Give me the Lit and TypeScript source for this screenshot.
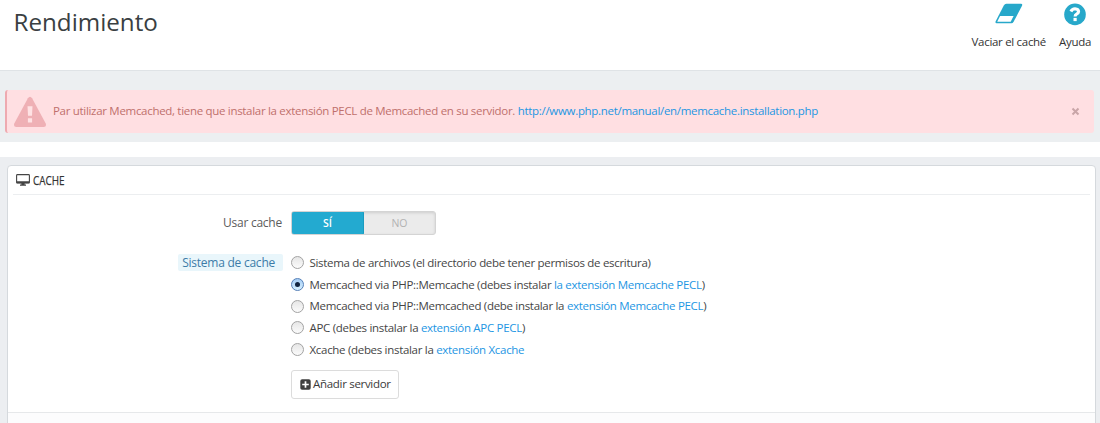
/**
 * Performance settings page
 *
 * Page header with toolbar, alert message and the cache configuration panel
 */

import { LitElement, html, css, nothing } from 'lit';
import { customElement, state } from 'lit/decorators.js';
import { classMap } from 'lit/directives/class-map.js';

interface CacheSystem {
  id: string;
  label: string;
  link?: string;
  suffix?: string;
}

const CACHE_SYSTEMS: CacheSystem[] = [
  { id: 'fs', label: 'Sistema de archivos (el directorio debe tener permisos de escritura)' },
  {
    id: 'memcache',
    label: 'Memcached via PHP::Memcache (debes instalar ',
    link: 'la extensión Memcache PECL',
    suffix: ')',
  },
  {
    id: 'memcached',
    label: 'Memcached via PHP::Memcached (debe instalar la ',
    link: 'extensión Memcache PECL',
    suffix: ')',
  },
  { id: 'apc', label: 'APC (debes instalar la ', link: 'extensión APC PECL', suffix: ')' },
  { id: 'xcache', label: 'Xcache (debes instalar la ', link: 'extensión Xcache' },
];

@customElement('app-root')
export class AppRoot extends LitElement {
  @state()
  private cacheEnabled = true;

  @state()
  private selected = 'memcache';

  static override styles = css`
    :host {
      display: flex;
      flex-direction: column;
      height: 423px;
      overflow: hidden;
      background: #fff;
      color: #454545;
      font-family: 'Open Sans', 'Noto Sans', sans-serif;
      font-size: 11.5px;
      letter-spacing: -0.305px;
      line-height: 16px;
    }

    * {
      box-sizing: border-box;
    }

    svg {
      display: block;
      flex: none;
    }

    a {
      color: #1d96e3;
      text-decoration: none;
    }

    .header {
      display: flex;
      justify-content: space-between;
      height: 70px;
      padding: 0 9px 0 13.5px;
      flex: none;
    }

    h1 {
      margin: 6px 0 0;
      font-size: 24.2px;
      font-weight: 400;
      letter-spacing: 0;
      line-height: 32px;
      color: #3a3f42;
    }

    .toolbar {
      display: flex;
      gap: 13px;
      padding-top: 3px;
    }

    .tool {
      display: flex;
      flex-direction: column;
      align-items: center;
      gap: 8px;
      color: #333;
      white-space: nowrap;
    }

    .notice {
      flex: none;
      height: 72px;
      padding: 19px 6px 0 5px;
      border-top: 1px solid #dfe3e6;
      background: #eceff1;
    }

    .alert {
      display: flex;
      align-items: center;
      height: 43px;
      padding: 0 14px 0 6px;
      border-left: 2px solid #eeaab0;
      border-radius: 3px;
      background: #ffdfe2;
      color: #c0706c;
    }

    .alert p {
      flex: 1;
      margin: -1px 0 0 6px;
      white-space: nowrap;
    }

    .content {
      flex: 1;
      margin-top: 15px;
      padding: 8px 4px 0 7px;
      background: #eceef1;
    }

    .panel {
      height: 270px;
      border: 1px solid #d5d9dd;
      border-radius: 4px;
      background: #fff;
    }

    .panel-heading {
      display: flex;
      align-items: center;
      gap: 2.5px;
      height: 29px;
      margin: 0 5px;
      padding: 0 0 1px 3px;
      border-bottom: 1px solid #eceef0;
    }

    .panel-heading span {
      font-size: 13.2px;
      letter-spacing: 0;
      transform: scaleX(0.75);
      transform-origin: left;
      color: #333;
      -webkit-text-stroke: 0.25px #333;
    }

    .form {
      display: grid;
      grid-template-columns: 275px 1fr;
      column-gap: 8px;
      height: 218px;
      padding-top: 16px;
      align-content: start;
      border-bottom: 1px solid #e6e8ea;
    }

    .label {
      justify-self: end;
      padding: 0 1px 0 4px;
      line-height: 23px;
      font-size: 12px;
      letter-spacing: -0.24px;
      color: #5c5c5c;
    }

    .label.hint {
      margin-top: 19px;
      padding: 0 8px 0 4px;
      height: 17px;
      line-height: 17px;
      border-radius: 2px;
      background: #e9f6fb;
      color: #3d7ca8;
    }

    .switch {
      display: flex;
      width: 145px;
      height: 24px;
      border: 1px solid #d4d4d4;
      border-radius: 3px;
      background: #ebebeb;
      box-shadow: inset 0 1px 3px rgba(0, 0, 0, 0.12);
      overflow: hidden;
    }

    .option {
      flex: 1;
      line-height: 22px;
      font-size: 10.5px;
      letter-spacing: 0;
      text-align: center;
      color: #b2b2b2;
      cursor: pointer;
    }

    .option.on {
      margin: -1px 0 -1px -1px;
      border: 1px solid #1a9cc0;
      border-radius: 3px 2px 2px 3px;
      background: #23aad0;
      color: #fff;
      font-weight: 600;
    }

    .choices {
      padding-top: 17px;
    }

    .choice {
      display: flex;
      align-items: center;
      gap: 5.5px;
      height: 21.7px;
      white-space: pre;
    }

    .radio {
      display: flex;
      align-items: center;
      justify-content: center;
      width: 13px;
      height: 13px;
      border: 1px solid #a3a3a3;
      border-radius: 50%;
      background: linear-gradient(#e6e6e6, #fbfbfb);
    }

    .radio.checked {
      border-color: #5580b8;
      background: linear-gradient(#a5ccf4, #d6f0ff);
    }

    .radio.checked::after {
      content: '';
      width: 5px;
      height: 5px;
      border-radius: 50%;
      background: #10233f;
    }

    .add {
      display: flex;
      align-items: center;
      gap: 2px;
      width: 108px;
      height: 29px;
      margin-top: 10px;
      padding: 0 0 1px 8px;
      border: 1px solid #dcdcdc;
      border-radius: 3px;
      background: #fff;
      color: #3a3a3a;
      font: inherit;
      letter-spacing: inherit;
      white-space: nowrap;
    }

    .panel-footer {
      height: 22px;
      background: #fcfcfd;
    }
  `;

  override render() {
    return html`
      <header class="header">
        <h1>Rendimiento</h1>
        <div class="toolbar">
          <div class="tool">
            <svg width="28" height="23" viewBox="0 0 28 23">
              <path
                d="M11.3 0.8H26q1.8 0.2 1 2L18.6 18.8Q17.8 20.3 16.4 20.3H1.6Q-0.1 20 0.7 18.2L8.8 2.4Q9.7 0.9 11.3 0.8Z"
                fill="#27a8ca"
              />
              <path d="M5.1 13.1H18.6L15.7 18.7H2.2Z" fill="#fff" />
            </svg>
            <span>Vaciar el caché</span>
          </div>
          <div class="tool">
            <svg width="22" height="23" viewBox="0 0 22 23">
              <circle cx="11" cy="11.4" r="10.8" fill="#27a8ca" />
              <path
                d="M6.9 8.5Q8.2 5.7 11 5.7Q14.6 5.9 14.6 8.7Q14.5 10.3 12.6 11.1Q11.1 11.8 11.1 13.5"
                fill="none"
                stroke="#fff"
                stroke-width="3.1"
              />
              <rect x="9.5" y="14.9" width="3.2" height="3.2" fill="#fff" />
            </svg>
            <span>Ayuda</span>
          </div>
        </div>
      </header>

      <section class="notice">
        <div class="alert">
          <svg width="34" height="32" viewBox="0 0 34 32">
            <path
              d="M14.9 2.2Q17 -0.9 19.1 2.2L32.6 27.2Q34 30.7 30.7 31H3.3Q0 30.7 1.4 27.2Z"
              fill="#efb0b5"
            />
            <path d="M14.5 10.3H19.5L19 19.7H15ZM14.9 22.3H19.1V26.5H14.9Z" fill="#ffe2e4" />
          </svg>
          <p>
            Par utilizar Memcached, tiene que instalar la extensión PECL de Memcached en su servidor.
            <a href="#">http://www.php.net/manual/en/memcache.installation.php</a>
          </p>
          <svg width="9" height="9" viewBox="0 0 9 9">
            <path d="M1.5 1.5L7.5 7.5M7.5 1.5L1.5 7.5" stroke="#c9a5a8" stroke-width="2" />
          </svg>
        </div>
      </section>

      <main class="content">
        <div class="panel">
          <div class="panel-heading">
            <svg width="14" height="12" viewBox="0 0 14 12">
              <rect x="0.6" y="0.6" width="12.8" height="8.4" rx="0.8" fill="#fff" stroke="#444" stroke-width="1.1" />
              <path d="M0.6 7.3H13.4V9.2H0.6ZM5.4 9H8.6V10.5H10V11.7H4V10.5H5.4Z" fill="#444" />
            </svg>
            <span>CACHE</span>
          </div>
          <div class="form">
            <div class="label">Usar cache</div>
            <div class="switch">
              <span
                class=${classMap({ option: true, on: this.cacheEnabled })}
                @click=${(): void => this.toggleCache(true)}
                >SÍ</span
              >
              <span
                class=${classMap({ option: true, on: !this.cacheEnabled })}
                @click=${(): void => this.toggleCache(false)}
                >NO</span
              >
            </div>
            <div class="label hint">Sistema de cache</div>
            <div class="choices">
              ${CACHE_SYSTEMS.map((system) => this.renderChoice(system))}
              <button class="add">
                <svg width="11" height="11" viewBox="0 0 11 11">
                  <rect x="0.3" y="0.3" width="10.4" height="10.4" rx="1.8" fill="#3f3f3f" />
                  <path d="M5.5 2.2V8.8M2.2 5.5H8.8" stroke="#fff" stroke-width="1.7" />
                </svg>
                Añadir servidor
              </button>
            </div>
          </div>
          <div class="panel-footer"></div>
        </div>
      </main>
    `;
  }

  private renderChoice(system: CacheSystem) {
    return html`<div class="choice" @click=${(): void => this.select(system.id)}>
      <span class=${classMap({ radio: true, checked: this.selected === system.id })}></span
      ><span>${system.label}${system.link ? html`<a href="#">${system.link}</a>` : nothing}${system.suffix ?? nothing}</span>
    </div>`;
  }

  private toggleCache(enabled: boolean): void {
    this.cacheEnabled = enabled;
  }

  private select(id: string): void {
    this.selected = id;
  }
}

declare global {
  interface HTMLElementTagNameMap {
    'app-root': AppRoot;
  }
}
